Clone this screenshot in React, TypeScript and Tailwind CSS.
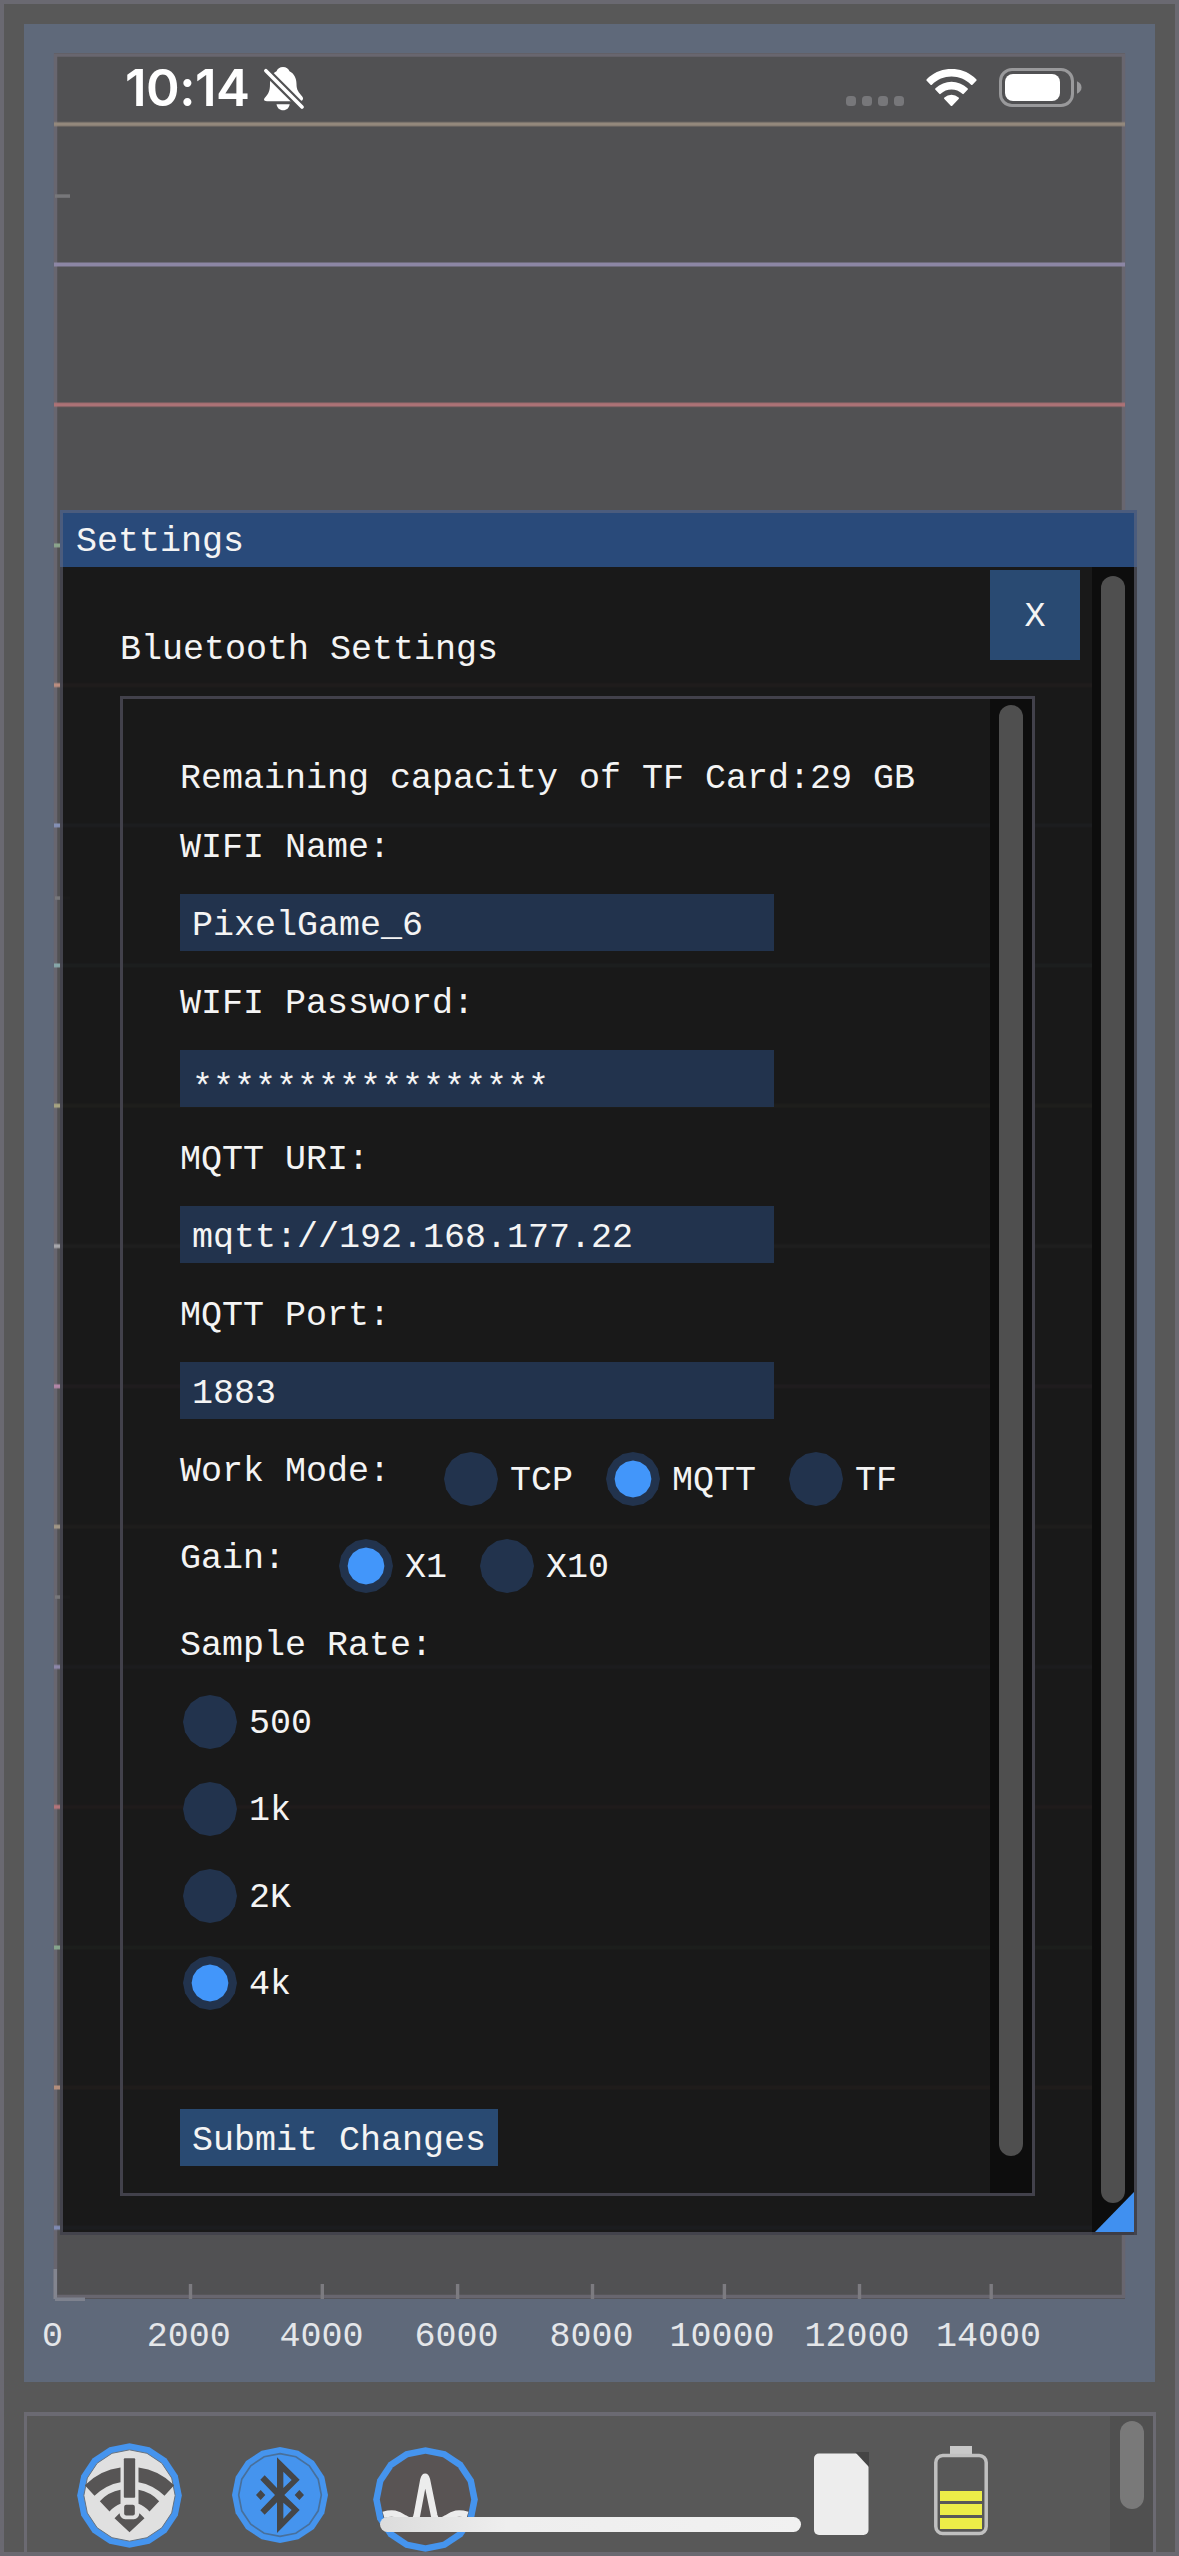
import type { ReactNode } from "react";

const gridLines = [
  { y: 124.3, color: "#93887c" },
  { y: 264.6, color: "#8c86a4" },
  { y: 404.8, color: "#ac7276" },
  { y: 545.5, color: "#8aa48c" },
  { y: 685.2, color: "#b98d80" },
  { y: 825.5, color: "#8490b4" },
  { y: 965.5, color: "#86a6a8" },
  { y: 1105.8, color: "#a6a382" },
  { y: 1246.2, color: "#a6a6aa" },
  { y: 1386.4, color: "#b186a6" },
  { y: 1526.8, color: "#a09686" },
  { y: 1667, color: "#8c86a8" },
  { y: 1807, color: "#b3747a" },
  { y: 1947.6, color: "#86a48c" },
  { y: 2087.6, color: "#b38e7c" },
  { y: 2227.8, color: "#7f8ab2" },
];

const xTicks = [
  { x: 190.5, start: 146.8, label: "2000" },
  { x: 322.3, start: 279.5, label: "4000" },
  { x: 457.6, start: 414.5, label: "6000" },
  { x: 592.5, start: 549.5, label: "8000" },
  { x: 724.4, start: 669.5, label: "10000" },
  { x: 859.5, start: 804.5, label: "12000" },
  { x: 991.2, start: 936, label: "14000" },
];

const yTicks = [196.3, 898.3, 1597.3];

function polygon(cx: number, cy: number, r: number) {
  return Array.from({ length: 16 }, (_, i) => {
    const a = (i * Math.PI) / 8;
    return `${(cx + r * Math.sin(a)).toFixed(1)},${(cy - r * Math.cos(a)).toFixed(1)}`;
  }).join(" ");
}

function Chart() {
  return (
    <svg className="block h-[2358px] w-[1131px] shrink-0" viewBox="24 24 1131 2358">
      <rect x="24" y="24" width="1131" height="2358" fill="#5f697a" />
      <rect x="54" y="53" width="1071" height="2246" fill="#515153" />
      <rect x="55.5" y="55" width="1068" height="2241.5" fill="none" stroke="#68666f" strokeWidth="3.5" />
      {yTicks.map((y) => (
        <rect key={y} x="55" y={y - 2} width="15" height="3.5" fill="#77777a" />
      ))}
      {gridLines.map((l) => (
        <g key={l.y} fill={l.color}>
          <rect x="54" y={l.y - 2.6} width="1071" height="5" opacity="0.5" />
          <rect x="54" y={l.y - 1.6} width="1071" height="3" />
        </g>
      ))}
      {xTicks.map((t) => (
        <rect key={t.x} x={t.x - 1.7} y="2284" width="3.4" height="15" fill="#7c7b80" />
      ))}
      <rect x="53.5" y="2269" width="3.5" height="30" fill="#83858f" />
      <rect x="55" y="2297.5" width="30" height="3.5" fill="#7e828e" />
      <g fill="#e4e6e9" fontSize="35" fontFamily='"Liberation Mono", monospace'>
        <text x="42" y="2345.5">0</text>
        {xTicks.map((t) => (
          <text key={t.label} x={t.start} y="2345.5">
            {t.label}
          </text>
        ))}
      </g>
    </svg>
  );
}

function Text({ children }: { children: ReactNode }) {
  return <div className="h-[39px] whitespace-pre leading-[46px]">{children}</div>;
}

function Field({ label, value, drop }: { label: string; value: string; drop?: boolean }) {
  return (
    <>
      <Text>{label}</Text>
      <div className="h-[57px] w-[594px] bg-[#22334d] px-3 pt-[9px]">
        <div className={drop ? "pt-[7px]" : ""}>
          <Text>{value}</Text>
        </div>
      </div>
    </>
  );
}

function Radio({ label, checked }: { label: string; checked?: boolean }) {
  return (
    <div className="flex h-[57px]">
      <svg className="size-[57px]" viewBox="0 0 57 57">
        <polygon points={polygon(30, 30, 27)} fill="#22334d" />
        {checked && <polygon points={polygon(30, 30, 18.4)} fill="#4296fa" />}
      </svg>
      <div className="pl-3 pt-[9px]">
        <Text>{label}</Text>
      </div>
    </div>
  );
}

function SettingsWindow() {
  return (
    <div className="absolute left-[60px] top-[510px] flex h-[1725px] w-[1077px] flex-col bg-[rgba(21,21,21,0.94)] text-[#f4f4f4]">
      <div className="h-[57px] shrink-0 bg-[#294a7a] pl-4 pt-[9px]">
        <Text>Settings</Text>
      </div>
      <div className="flex flex-1 pr-[3px]">
        <div className="w-[1032px] pl-[60px]">
          <div className="flex h-[129px] justify-between pr-3 pt-[3px]">
            <div className="pt-[57px]">
              <Text>Bluetooth Settings</Text>
            </div>
            <div className="flex size-[90px] justify-center bg-[#294a72] pt-[24px]">
              <Text>X</Text>
            </div>
          </div>
          <div className="flex h-[1500px] w-[915px] border-[3.5px] border-[#42414b]">
            <div className="flex w-[867px] flex-col gap-[30px] pl-[57px] pt-[57px]">
              <Text>Remaining capacity of TF Card:29 GB</Text>
              <Field label="WIFI Name:" value="PixelGame_6" />
              <Field label="WIFI Password:" value="*****************" drop />
              <Field label="MQTT URI:" value="mqtt://192.168.177.22" />
              <Field label="MQTT Port:" value="1883" />
              <div className="flex gap-[30px]">
                <Text>{"Work Mode: "}</Text>
                <Radio label="TCP" />
                <Radio label="MQTT" checked />
                <Radio label="TF" />
              </div>
              <div className="flex gap-[30px]">
                <Text>{"Gain: "}</Text>
                <Radio label="X1" checked />
                <Radio label="X10" />
              </div>
              <Text>Sample Rate:</Text>
              <Radio label="500" />
              <Radio label="1k" />
              <Radio label="2K" />
              <Radio label="4k" checked />
              <div className="mt-[69px] h-[57px] w-[318px] bg-[#294a72] px-3 pt-[9px]">
                <Text>Submit Changes</Text>
              </div>
            </div>
            <div className="flex w-[42px] justify-center bg-[#0d0d0d] pr-[1px] pt-[6px]">
              <div className="h-[1451px] w-6 rounded-full bg-[#4f4f4f]" />
            </div>
          </div>
        </div>
        <div className="flex w-[42px] justify-center bg-[#0d0d0d] pt-[9px]">
          <div className="h-[1627px] w-6 rounded-full bg-[#4f4f4f]" />
        </div>
      </div>
      <div className="pointer-events-none absolute inset-0 border-[3px] border-[rgba(110,110,128,0.5)]" />
      <svg className="absolute bottom-[3px] right-[3px] h-10 w-10" viewBox="0 0 40 40">
        <polygon points="40,0 40,40 1,40" fill="#4090f0" />
      </svg>
    </div>
  );
}

function StatusBar() {
  return (
    <div className="absolute left-0 top-0 flex h-[116px] w-full items-start text-white">
      <div className="ml-[125px] mt-[58px] h-[60px] w-[139px] whitespace-nowrap font-['Inter'] text-[51px] font-semibold leading-[60px] tracking-[-0.5px]">
        10:14
      </div>
      <svg className="mt-[67px] h-[44px] w-[40px]" viewBox="0 0 40 44">
        <path
          d="M19 0c-3.300 0-5.500 1.800-6.500 4.300C8 6.600 6 11 6 17c0 7-1.500 9.500-4.500 13C-1 32.600-.2 34.200 3 34.200h32.500c3 0 4.600-2.200 2.900-4.500C34.500 25 32.500 23 32.500 17c0-6-2.500-10.500-7-12.700C24.500 1.800 22.300 0 19 0z"
          fill="#fff"
        />
        <path d="M12.500 37.300h13.200c-.7 3.700-3 6-6.600 6s-5.900-2.300-6.600-6z" fill="#fff" />
        <path d="M-1 1L35.500 37.500" stroke="#515153" strokeWidth="8" />
        <path d="M1.900 3.700L38 40" stroke="#fff" strokeWidth="3.600" strokeLinecap="round" />
      </svg>
      <div className="ml-[542px] mt-[96px] flex gap-[6px]">
        <div className="size-[10px] rounded-[3.500px] bg-[#77777a]" />
        <div className="size-[10px] rounded-[3.500px] bg-[#77777a]" />
        <div className="size-[10px] rounded-[3.500px] bg-[#77777a]" />
        <div className="size-[10px] rounded-[3.500px] bg-[#77777a]" />
      </div>
      <svg className="ml-[22px] mt-[69px] h-[37px] w-[51px]" viewBox="0 0 17.140 12" preserveAspectRatio="none">
        <path
          fill="#fff"
          d="M8.571 2.466c2.447 0 4.800.94 6.573 2.627.133.13.346.128.478-.004l1.276-1.289a.345.345 0 00-.003-.49C12.242-1.166 4.900-1.166.246 3.310a.345.345 0 00-.004.490l1.277 1.290c.131.132.344.134.478.003C3.770 3.405 6.124 2.466 8.570 2.466zm.003 4.192c1.345 0 2.641.5 3.638 1.404.135.128.347.126.478-.006l1.275-1.289a.347.347 0 00-.005-.495c-3.034-2.830-7.735-2.830-10.769 0a.347.347 0 00-.005.495l1.274 1.289c.131.132.343.134.478.006a5.413 5.413 0 013.636-1.404zm2.499 2.825a.338.338 0 01-.1.247L8.817 11.900a.346.346 0 01-.491 0L6.167 9.730a.338.338 0 01.01-.489 3.780 3.780 0 014.787 0c.07.063.109.152.11.242z"
        />
      </svg>
      <svg className="ml-[22px] mt-[68px] h-[39px] w-[83px]" viewBox="0 0 83 39">
        <rect x="1.500" y="1.500" width="72" height="36" rx="11.500" fill="none" stroke="#99999b" strokeWidth="3" />
        <rect x="6" y="6" width="55" height="27" rx="8" fill="#fff" />
        <path d="M78 13.300c3 1.300 4.500 3.600 4.500 6.200s-1.500 4.900-4.500 6.200z" fill="#99999b" />
      </svg>
    </div>
  );
}

function WifiAlertIcon() {
  const bands = (
    <>
      <path d="M103 252Q150 206 210 199V243Q165 251 132 284Z" />
      <path d="M148 300Q175 272 210 266V308Q193 314 177 331Z" />
    </>
  );
  return (
    <svg className="ml-[49.500px] mt-[26.500px] size-[105px]" viewBox="79.500 125.500 315 315">
      <polygon points={polygon(237, 283, 157)} fill="#4594ee" />
      <polygon points={polygon(237, 283, 137)} fill="#e0e0e0" stroke="#66727f" strokeWidth="3" />
      <g fill="#575555">
        {bands}
        <g transform="translate(474 0) scale(-1 1)">{bands}</g>
        <rect x="220" y="171" width="34" height="119" rx="3" />
        <rect x="221" y="311" width="32" height="32" rx="6" />
        <path d="M192 351L207 336Q210 353 224 354H250Q264 353 267 336L282 351L237 393Z" />
      </g>
    </svg>
  );
}

function BluetoothIcon() {
  return (
    <svg className="ml-[50px] mt-[30.500px] size-[96px]" viewBox="543 139 288 288">
      <polygon points={polygon(687, 283, 144)} fill="#4594ee" />
      <polygon points={polygon(687, 283, 124)} fill="none" stroke="#48709c" strokeWidth="5" />
      <path
        fill="#454648"
        fillRule="evenodd"
        d="M678 170L746 237L700 283L746 328L678 397V305L641 342L628 329L672 283L628 237L641 224L678 262ZM697 213V262L722 238ZM697 306V354L722 328Z"
      />
      <path fill="#454648" d="M629 268l14 15l-14 15l-14-15zM745 268l14 15l-14 15l-14-15z" />
    </svg>
  );
}

function PulseIcon() {
  return (
    <svg className="ml-[45px] mt-[30.500px] size-[105px]" viewBox="966.500 139.500 315 315">
      <polygon points={polygon(1124, 297, 157)} fill="#4594ee" />
      <polygon points={polygon(1124, 297, 137)} fill="#595454" />
      <path
        d="M998 343C1025 335 1040 339 1060 353C1082 367 1094 362 1098 345L1118 238Q1123 220 1128 238L1150 345C1154 362 1166 367 1188 353C1208 339 1222 335 1250 343"
        fill="none"
        stroke="#ececec"
        strokeWidth="20"
      />
    </svg>
  );
}

function Toolbar() {
  return (
    <div className="mt-[30px] flex h-[144px] w-[1132px] shrink-0 items-start border-x-[3.500px] border-t-[4px] border-[#6b6a72]">
      <WifiAlertIcon />
      <BluetoothIcon />
      <PulseIcon />
      <svg className="ml-[336px] mt-[36px] h-[84px] w-[55px]" viewBox="0 0 55 84">
        <rect x="0" y="1.500" width="54.500" height="81.500" rx="5" fill="#ededed" />
        <polygon points="41,0 55,0 55,15" fill="#454545" />
      </svg>
      <svg className="ml-[65px] mt-[30px] h-[90px] w-[54px]" viewBox="0 0 54 90">
        <rect x="16" y="0" width="22" height="9" fill="#c8c8c8" />
        <rect x="1.800" y="9.500" width="50.400" height="78" rx="7" fill="none" stroke="#c0c0c0" strokeWidth="3.500" />
        <g fill="#eced48">
          <rect x="6" y="45" width="42" height="10" />
          <rect x="6" y="58" width="42" height="11" />
          <rect x="6" y="72" width="42" height="11" />
        </g>
      </svg>
      <div className="ml-auto flex h-full w-[43px] justify-center bg-[#505050] pt-[5px]">
        <div className="h-[88px] w-6 rounded-full bg-[#797979]" />
      </div>
    </div>
  );
}

export default function App() {
  return (
    <div className="relative flex h-[2556px] w-[1179px] flex-col overflow-hidden bg-[#585858] pl-6 pt-6 font-['Liberation_Mono',monospace] text-[35px]">
      <Chart />
      <Toolbar />
      <div className="pointer-events-none absolute inset-0 border-[4px] border-[#6a6971]" />
      <SettingsWindow />
      <StatusBar />
      <div className="absolute left-[380px] top-[2517px] h-[15px] w-[421px] rounded-full bg-linear-to-r from-[#dcdcdc] via-[#eeeeee] via-30% to-[#f1f1f1]" />
    </div>
  );
}
